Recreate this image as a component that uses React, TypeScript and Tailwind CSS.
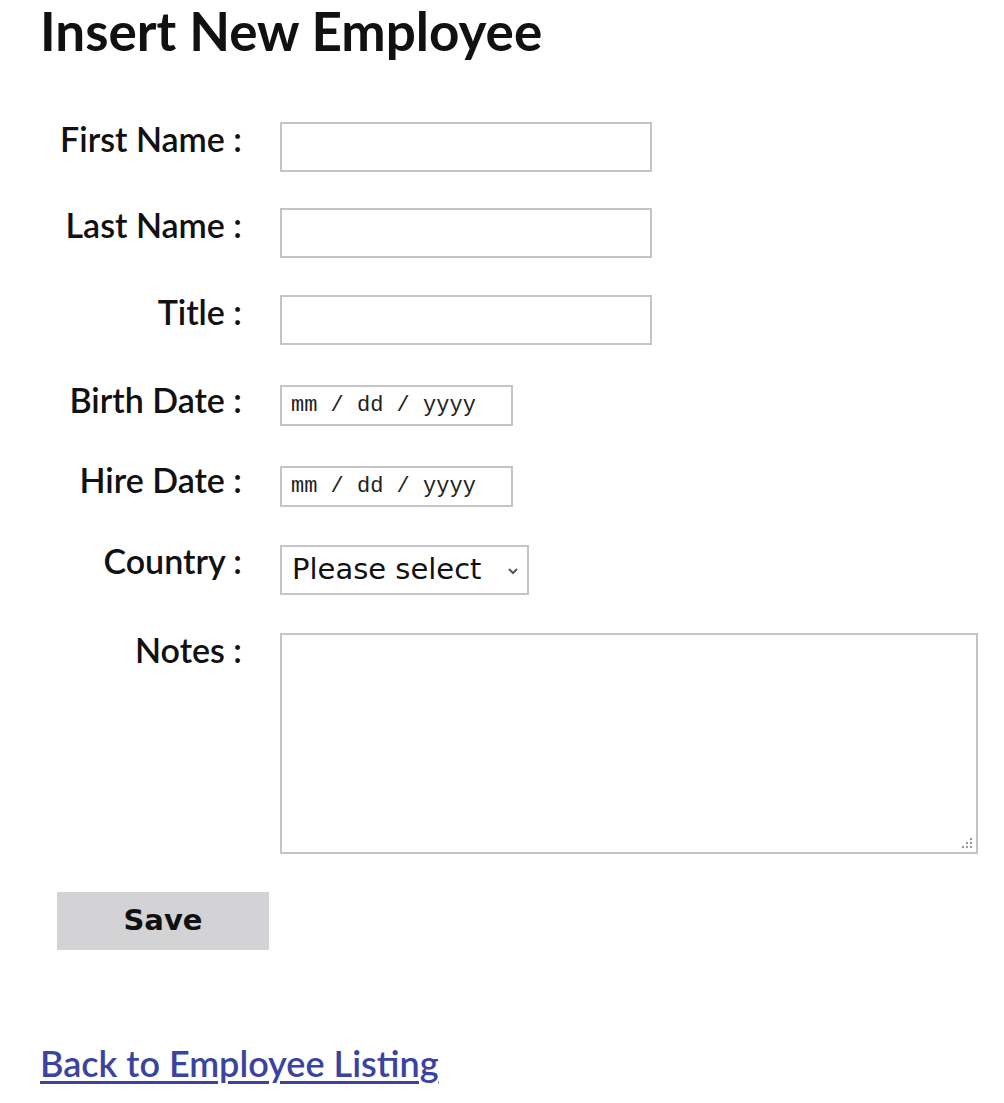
import React from "react";

const Row = ({ label, children, pt }: { label: string; children: React.ReactNode; pt: string }) => (
  <div className="flex items-start">
    <div className={`w-[202px] text-right text-[34px] font-semibold leading-[36px] text-[#111] ${pt}`}>{label}</div>
    <div className="ml-[38px]">{children}</div>
  </div>
);

export default function App() {
  return (
    <div className="min-h-[1103px] bg-white pl-[40px] pt-[1px] font-['Lato','Open_Sans',sans-serif] text-[#111]">
      <h1 className="text-[53px] font-bold leading-[60px]">Insert New Employee</h1>
      <div className="mt-[61px] flex flex-col">
        <Row label="First Name :" pt="-mt-[1px]">
          <input type="text" className="block h-[50px] w-[372px] border-2 border-[#c4c4c8] bg-white" />
        </Row>
        <div className="h-[36px]" />
        <Row label="Last Name :" pt="-mt-[1px]">
          <input type="text" className="block h-[50px] w-[372px] border-2 border-[#c4c4c8] bg-white" />
        </Row>
        <div className="h-[37px]" />
        <Row label="Title :" pt="-mt-[1px]">
          <input type="text" className="block h-[50px] w-[372px] border-2 border-[#c4c4c8] bg-white" />
        </Row>
        <div className="h-[40px]" />
        <Row label="Birth Date :" pt="-mt-[3px]">
          <div className="flex h-[41px] w-[233px] items-center border-2 border-[#c4c4c8] pl-[9px] font-['Liberation_Mono',monospace] text-[22px] text-[#222]">
            mm / dd / yyyy
          </div>
        </Row>
        <div className="h-[40px]" />
        <Row label="Hire Date :" pt="-mt-[4px]">
          <div className="flex h-[41px] w-[233px] items-center border-2 border-[#c4c4c8] pl-[9px] font-['Liberation_Mono',monospace] text-[22px] text-[#222]">
            mm / dd / yyyy
          </div>
        </Row>
        <div className="h-[38px]" />
        <Row label="Country :" pt="-mt-[2px]">
          <div className="flex h-[50px] w-[249px] items-center justify-between border-2 border-[#c4c4c8] pl-[10px] pr-[8px] font-['DejaVu_Sans',sans-serif] text-[29px] text-[#111]">
            <span>Please select</span>
            <svg width="12" height="9" viewBox="0 0 12 9" className="mt-[2px]">
              <path d="M2 2 L6 6 L10 2" fill="none" stroke="#555" strokeWidth="2" />
            </svg>
          </div>
        </Row>
        <div className="h-[38px]" />
        <Row label="Notes :" pt="-mt-[1px]">
          <div className="relative h-[221px] w-[698px] border-2 border-[#c4c4c8] bg-white">
            <svg width="12" height="12" viewBox="0 0 12 12" className="absolute bottom-[3px] right-[3px]">
              <circle cx="10" cy="2" r="1.2" fill="#999" />
              <circle cx="6" cy="6" r="1.2" fill="#999" />
              <circle cx="10" cy="6" r="1.2" fill="#999" />
              <circle cx="2" cy="10" r="1.2" fill="#999" />
              <circle cx="6" cy="10" r="1.2" fill="#999" />
              <circle cx="10" cy="10" r="1.2" fill="#999" />
            </svg>
          </div>
        </Row>
      </div>
      <button className="ml-[17px] mt-[38px] block h-[58px] w-[212px] bg-[#d3d3d6] font-['DejaVu_Sans',sans-serif] text-[29px] font-bold text-[#111]">
        Save
      </button>
      <div className="mt-[86px]">
        <a href="#" className="text-[36px] font-semibold text-[#3a44a0] underline decoration-[3px] underline-offset-[4px]">
          Back to Employee Listing
        </a>
      </div>
    </div>
  );
}
